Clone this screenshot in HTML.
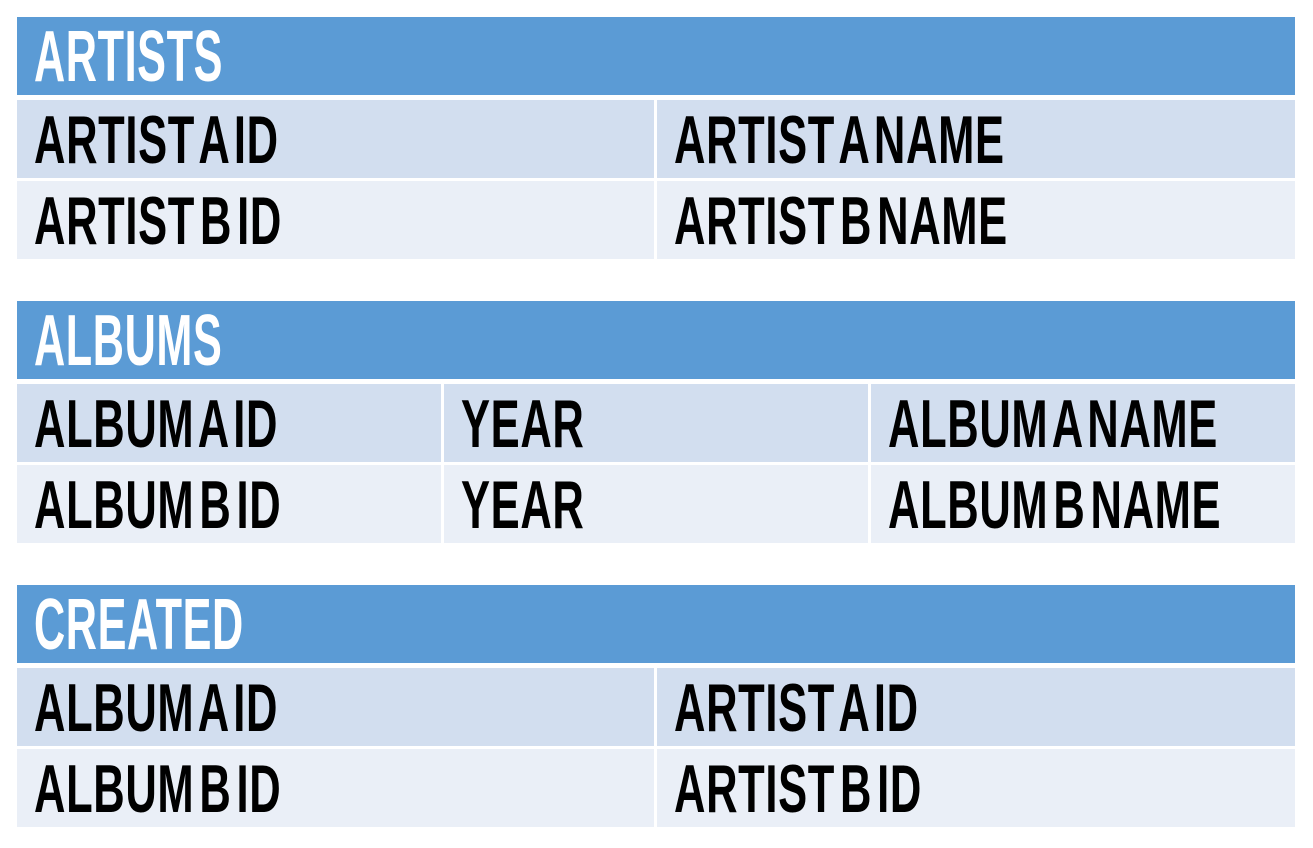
<!DOCTYPE html>
<html><head><style>
body{margin:0;background:#fff;width:1313px;height:848px;position:relative;overflow:hidden;font-family:"Liberation Sans Narrow","Liberation Sans",sans-serif;font-weight:bold}
.h{position:absolute;background:#5b9bd5;height:78px;left:17px;width:1278px}
.c{position:absolute;height:78px;overflow:hidden}
.r1{background:#d2deef}.r2{background:#eaeff7}
.t{position:absolute;left:17px;top:1px;line-height:78px;font-size:68px;transform:scaleX(0.64);transform-origin:left center;white-space:nowrap;color:#000;letter-spacing:1px;word-spacing:-12px}
.h .t{color:#fff;top:1px;font-size:72px;transform:scaleX(0.6)}
</style></head><body>
<div class="h" style="top:17px"><span class="t">ARTISTS</span></div>
<div class="c r1" style="top:100px;left:17px;width:637px"><span class="t">ARTIST A ID</span></div>
<div class="c r1" style="top:100px;left:657px;width:638px"><span class="t">ARTIST A NAME</span></div>
<div class="c r2" style="top:181px;left:17px;width:637px"><span class="t">ARTIST B ID</span></div>
<div class="c r2" style="top:181px;left:657px;width:638px"><span class="t">ARTIST B NAME</span></div>

<div class="h" style="top:301px"><span class="t">ALBUMS</span></div>
<div class="c r1" style="top:384px;left:17px;width:424px"><span class="t">ALBUM A ID</span></div>
<div class="c r1" style="top:384px;left:444px;width:424px"><span class="t">YEAR</span></div>
<div class="c r1" style="top:384px;left:871px;width:424px"><span class="t">ALBUM A NAME</span></div>
<div class="c r2" style="top:465px;left:17px;width:424px"><span class="t">ALBUM B ID</span></div>
<div class="c r2" style="top:465px;left:444px;width:424px"><span class="t">YEAR</span></div>
<div class="c r2" style="top:465px;left:871px;width:424px"><span class="t">ALBUM B NAME</span></div>

<div class="h" style="top:585px"><span class="t">CREATED</span></div>
<div class="c r1" style="top:668px;left:17px;width:637px"><span class="t">ALBUM A ID</span></div>
<div class="c r1" style="top:668px;left:657px;width:638px"><span class="t">ARTIST A ID</span></div>
<div class="c r2" style="top:749px;left:17px;width:637px"><span class="t">ALBUM B ID</span></div>
<div class="c r2" style="top:749px;left:657px;width:638px"><span class="t">ARTIST B ID</span></div>
</body></html>
